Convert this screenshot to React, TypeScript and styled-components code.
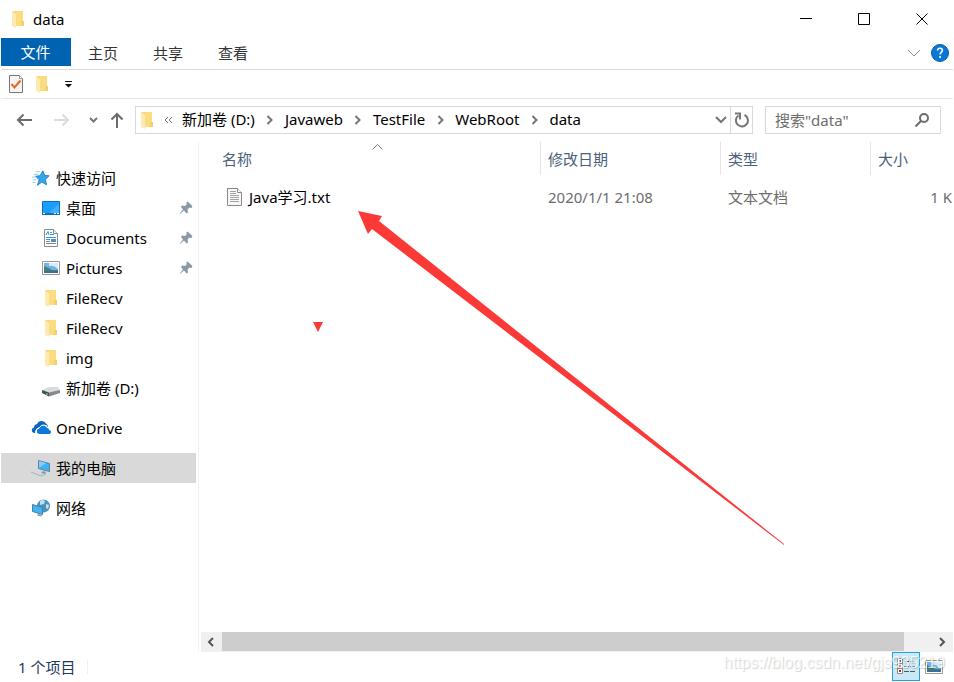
import React from "react";
import styled, { createGlobalStyle } from "styled-components";

const GlobalStyle = createGlobalStyle`
  *, *::before, *::after { box-sizing: border-box; }
  html, body { margin: 0; padding: 0; background: #fff; }
  body, button, input, table {
    font-family: "Noto Sans", "Noto Sans CJK SC", sans-serif;
    font-size: 15px;
    line-height: 20px;
    color: #000;
  }
`;

const Window = styled.div`
  display: flex;
  flex-direction: column;
  min-height: 100vh;
  padding: 0 1px;
  overflow: hidden;
  background: #fff;
  svg { display: block; flex: none; }
`;

const PlainButton = styled.button`
  display: flex;
  align-items: center;
  justify-content: center;
  padding: 0;
  border: 0;
  background: transparent;
`;

const TitleBar = styled.header`
  display: flex;
  align-items: center;
  height: 38px;
  padding: 0 2px 0 10px;
`;

const Title = styled.h1`
  flex: 1;
  margin: 0 0 0 8px;
  font-size: 15px;
  font-weight: 400;
`;

const CaptionButton = styled(PlainButton)`
  width: 58px;
  height: 38px;
`;

const RibbonTabs = styled.nav`
  display: flex;
  height: 32px;
  border-bottom: 1px solid #dadbdc;
`;

const RibbonTab = styled(PlainButton)<{ $primary?: boolean }>`
  width: ${(p) => (p.$primary ? "70px" : "65px")};
  height: ${(p) => (p.$primary ? "28px" : "30px")};
  padding-right: 1px;
  color: ${(p) => (p.$primary ? "#fff" : "#333")};
  background: ${(p) => (p.$primary ? "#0063b1" : "transparent")};
`;

const Spacer = styled.div`
  flex: 1;
`;

const SmallButton = styled(PlainButton)`
  width: 26px;
  height: 30px;
`;

const QuickBar = styled.div`
  display: flex;
  align-items: center;
  height: 29px;
  padding-left: 2px;
  border-bottom: 1px solid #e8e8e8;
`;

const AddressBar = styled.div`
  display: flex;
  align-items: center;
  height: 43px;
  padding: 0 12px 2px 4px;
`;

const NavButton = styled(PlainButton)<{ $narrow?: boolean }>`
  width: ${(p) => (p.$narrow ? "24px" : "38px")};
  height: 28px;
`;

const PathBox = styled.div`
  display: flex;
  align-items: center;
  flex: 1;
  height: 28px;
  margin: 0 12px 0 6px;
  padding-left: 4px;
  border: 1px solid #d9d9d9;
`;

const Crumb = styled(PlainButton)`
  height: 26px;
  padding-bottom: 2px;
  white-space: nowrap;
`;

const CrumbArrow = styled.span<{ $first?: boolean }>`
  display: flex;
  justify-content: center;
  width: ${(p) => (p.$first ? "28px" : "30px")};
`;

const RefreshButton = styled(PlainButton)`
  width: 22px;
  height: 26px;
  border-left: 1px solid #d9d9d9;
`;

const SearchBox = styled.label`
  display: flex;
  align-items: center;
  width: 176px;
  height: 28px;
  padding: 0 11px 0 9px;
  border: 1px solid #d9d9d9;
`;

const SearchInput = styled.input`
  flex: 1;
  min-width: 0;
  padding: 0;
  border: 0;
  outline: 0;
  background: transparent;
  &::placeholder { color: #6d6d6d; opacity: 1; }
`;

const Main = styled.main`
  display: flex;
  flex: 1;
`;

const Sidebar = styled.nav`
  width: 198px;
  padding: 21px 2px 0 0;
  border-right: 1px solid #f2f2f2;
`;

const Tree = styled.ul`
  margin: 0;
  padding: 0;
  list-style: none;
`;

const TreeRow = styled.li<{ $nested?: boolean; $selected?: boolean; $spaced?: boolean }>`
  display: flex;
  align-items: center;
  height: 30px;
  margin-top: ${(p) => (p.$spaced ? "10px" : "0")};
  padding: 0 3px 0 ${(p) => (p.$nested ? "40px" : "30px")};
  background: ${(p) => (p.$selected ? "#d9d9d9" : "transparent")};
`;

const TreeLink = styled.a`
  display: flex;
  flex: 1;
  align-items: center;
  gap: 5px;
  color: inherit;
  text-decoration: none;
  white-space: nowrap;
`;

const IconSlot = styled.span`
  display: flex;
  justify-content: center;
  width: 20px;
`;

const FilePane = styled.section`
  position: relative;
  display: flex;
  flex: 1;
  flex-direction: column;
  min-width: 0;
  padding-left: 2px;
`;

const FileTable = styled.table`
  width: 100%;
  table-layout: fixed;
  border-collapse: separate;
  border-spacing: 0;
`;

const Column = styled.col<{ $width?: number }>`
  width: ${(p) => (p.$width ? `${p.$width}px` : "auto")};
`;

const HeadCell = styled.th<{ $first?: boolean }>`
  position: relative;
  height: 33px;
  padding: 0 0 0 ${(p) => (p.$first ? "21px" : "7px")};
  border-left: ${(p) => (p.$first ? "0" : "1px solid #e5e5e5")};
  color: #4c607a;
  font-weight: 400;
  text-align: left;
  white-space: nowrap;
`;

const SortMark = styled.span`
  position: absolute;
  top: 2px;
  left: 50%;
  padding-left: 1px;
`;

const Cell = styled.td<{ $right?: boolean }>`
  height: 44px;
  padding: 0 ${(p) => (p.$right ? "1px" : "0")} 0 8px;
  color: #6d6d6d;
  text-align: ${(p) => (p.$right ? "right" : "left")};
  white-space: nowrap;
`;

const FileName = styled.a`
  display: flex;
  align-items: center;
  gap: 6px;
  padding-left: 18px;
  color: #000;
  text-decoration: none;
`;

const Annotation = styled.svg`
  position: absolute;
  top: 58px;
  left: 109px;
  pointer-events: none;
`;

const ScrollTrack = styled.div`
  display: flex;
  height: 20px;
  margin-top: auto;
  background: #f0f0f0;
`;

const ScrollButton = styled(PlainButton)<{ $end?: boolean }>`
  width: 21px;
  margin-left: ${(p) => (p.$end ? "auto" : "0")};
  padding-right: 2px;
`;

const ScrollThumb = styled.div`
  flex: 0 1 682px;
  height: 19px;
  background: #cdcdcd;
`;

const StatusBar = styled.footer`
  position: relative;
  display: flex;
  align-items: center;
  height: 30px;
  padding: 0 5px 1px 17px;
  color: #1e395b;
`;

const StatusText = styled.span`
  padding-right: 12px;
  border-right: 1px solid #f0f0f0;
  line-height: 14px;
`;

const ViewButton = styled(PlainButton)<{ $active?: boolean }>`
  width: 28px;
  height: 29px;
  border: 1px solid ${(p) => (p.$active ? "#26a0da" : "transparent")};
  background: ${(p) => (p.$active ? "#cbe8f6" : "transparent")};
`;

const Watermark = styled.span`
  position: absolute;
  right: 8px;
  bottom: 9px;
  color: rgba(255, 255, 255, 0.8);
  font-family: "Liberation Sans", sans-serif;
  font-size: 16px;
  text-shadow: 1px 1px 1px rgba(0, 0, 0, 0.18);
  pointer-events: none;
`;

const FolderIcon = () => (
  <svg width="14" height="18" viewBox="0 0 14 18" aria-hidden="true">
    <path d="M1 1h11v10h1v5H3z" fill="#f8d775" />
    <path d="M5 1h7v15H5z" fill="#fbdc80" />
    <path d="M10 11h3v5h-3z" fill="#f5cf68" />
    <path d="M1 1l4 3v14l-4-2z" fill="#fdeab0" />
  </svg>
);

const PropertiesIcon = () => (
  <svg width="16" height="20" viewBox="0 0 16 20" aria-hidden="true">
    <path d="M1.500 1.500h10l3 3v14h-13z" fill="#f5f5f5" stroke="#777" />
    <path d="M11.500 1.500v3h3" fill="#fff" stroke="#999" />
    <path d="M3.500 10l3 3.500 6-7" fill="none" stroke="#ef6321" strokeWidth="2" />
  </svg>
);

type ChevronProps = { d: string; w: number; h: number; color?: string; stroke?: number };
const Chevron = ({ d, w, h, color = "#767676", stroke = 2 }: ChevronProps) => (
  <svg width={w} height={h} viewBox={`0 0 ${w} ${h}`} aria-hidden="true">
    <path d={d} fill="none" stroke={color} strokeWidth={stroke} />
  </svg>
);

const CrumbSeparator = () => (
  <CrumbArrow>
    <Chevron d="M1.500 1l4 4-4 4" w={7} h={10} />
  </CrumbArrow>
);

const StarIcon = () => (
  <svg width="18" height="18" viewBox="0 0 20 18" aria-hidden="true">
    <path d="M12 1l2 5 5 .5-4 4 1 6-5-3-5 3.500 2-6-4-4 5-.5z" fill="#38a4e8" stroke="#1580cf" />
    <path d="M4 2h5M2 5h5M0 8h4M1 11h4M1 14h3" stroke="#8bcaf2" />
  </svg>
);

const DesktopIcon = () => (
  <svg width="18" height="14" viewBox="0 0 18 14" aria-hidden="true">
    <path d="M.5.5h17v12H.5z" fill="#1a9fff" stroke="#0a6fc2" />
    <path d="M7 12L17 3v9z" fill="#41b0ff" />
    <path d="M0 13h18" stroke="#0b6fb8" strokeWidth="2" />
    <path d="M1 12.500h2M12 12.500h2M15 12.500h2" stroke="#fff" />
  </svg>
);

const DocumentIcon = () => (
  <svg width="16" height="18" viewBox="0 0 16 18" aria-hidden="true">
    <path d="M1.500.5h9l4 4v13h-13z" fill="#fff" stroke="#8b8b8b" />
    <path d="M10.500.5v4h4" fill="#eee" stroke="#8b8b8b" />
    <path d="M3 6l2-3.500 1 3.500M7 3.500h2M7 5.500h4M3 8.500h10M3 10.500h4" fill="none" stroke="#2f97dc" />
    <path d="M3 12.500h4M3 14.500h10" stroke="#888" />
    <path d="M8 10h5v3H8z" fill="#4a90c8" />
  </svg>
);

const PictureIcon = () => (
  <svg width="18" height="14" viewBox="0 0 18 14" aria-hidden="true">
    <path d="M.5.5h17v13H.5z" fill="#fff" stroke="#999" />
    <path d="M2 2h14v10H2z" fill="#6db3ee" />
    <path d="M7 2h9v6q-4-4-9-3z" fill="#d8ebfa" />
    <path d="M2 5q5 2 8 4h6v1H2z" fill="#4b7f6d" />
    <path d="M2 10h14v2H2z" fill="#3a6f9a" />
  </svg>
);

const DriveIcon = () => (
  <svg width="20" height="18" viewBox="0 0 20 18" aria-hidden="true">
    <path d="M1 11l7-3h9l2 3-11 3z" fill="#d9dcde" />
    <path d="M1 11l7 2.500v4L1 14z" fill="#4c4f52" />
    <path d="M8 13.500l11-2.500v3L8 17.500z" fill="#85898c" />
    <path d="M5 14h2v2H5z" fill="#2fc14a" />
  </svg>
);

const OneDriveIcon = () => (
  <svg width="20" height="16" viewBox="0 0 20 16" aria-hidden="true">
    <path d="M4 13H3a2.800 2.800 0 0 1 0-5.500A3.800 3.800 0 0 1 6 4a5 5 0 0 1 9-.5q2 1 2 3.500Q12 3 9 7.500 4 8 4 13z" fill="#0a64c0" />
    <path d="M8 14a2.800 2.800 0 0 1 0-5.500 4.300 4.300 0 0 1 8-.5q2 0 2 2a2 2 0 0 1 0 4z" fill="#0a78dc" />
    <path d="M5 12q0-4 3.500-4.500Q11 3.500 16 6" fill="none" stroke="#fff" />
  </svg>
);

const ComputerIcon = () => (
  <svg width="20" height="18" viewBox="0 0 20 18" aria-hidden="true">
    <path d="M7.500 1.500l11 3v8l-11-3z" fill="#3cb2f7" stroke="#65819a" />
    <path d="M8 2l7 2-7 5z" fill="#83cffb" />
    <path d="M12 12l3 1-1 2-4-1z" fill="#8999a5" />
    <path d="M0 13l10 4 5-2" fill="none" stroke="#9eb3c4" />
  </svg>
);

const NetworkIcon = () => (
  <svg width="20" height="18" viewBox="0 0 20 18" aria-hidden="true">
    <circle cx="12.500" cy="7" r="6.500" fill="#4c92bf" />
    <path d="M9 2q3-2 5 0l-1 3-4 1zM15 5l3 1-1 4-2-1z" fill="#c5dfed" />
    <path d="M1.500 5.500l10 3v7l-10-3z" fill="#3eb5f6" stroke="#517d9b" />
    <path d="M7 15l4 1-1 1.500-4-1z" fill="#8b9ba7" />
  </svg>
);

const PinIcon = () => (
  <svg width="14" height="14" viewBox="0 0 14 14" aria-hidden="true">
    <path d="M8 1l5 5-1 1-1.500-.5-2 2 .5 3-1.500 1L5 9.500 1 13H.5l3.500-4.500L2 6l1-1.500 3 .5 2-2z" fill="#8a99a5" />
    <path d="M8.500.5l5 4.500L12 7 7 2z" fill="#8a99a5" />
  </svg>
);

const TextFileIcon = () => (
  <svg width="16" height="18" viewBox="0 0 16 18" aria-hidden="true">
    <path d="M.5.5h10l4 4v13H.5z" fill="#f7f7f7" stroke="#888" />
    <path d="M10.500.5v4h4" fill="#fff" stroke="#888" />
    <path d="M3 3.500h6M3 5.500h6M3 7.500h9M3 9.500h9M3 11.500h9M3 13.500h9" stroke="#a3a3a3" />
  </svg>
);

type Entry = { label: string; icon: React.ReactNode; nested?: boolean; pinned?: boolean; selected?: boolean; spaced?: boolean };
const entries: Entry[] = [
  { label: "快速访问", icon: <StarIcon /> },
  { label: "桌面", icon: <DesktopIcon />, nested: true, pinned: true },
  { label: "Documents", icon: <DocumentIcon />, nested: true, pinned: true },
  { label: "Pictures", icon: <PictureIcon />, nested: true, pinned: true },
  { label: "FileRecv", icon: <FolderIcon />, nested: true },
  { label: "FileRecv", icon: <FolderIcon />, nested: true },
  { label: "img", icon: <FolderIcon />, nested: true },
  { label: "新加卷 (D:)", icon: <DriveIcon />, nested: true },
  { label: "OneDrive", icon: <OneDriveIcon />, spaced: true },
  { label: "我的电脑", icon: <ComputerIcon />, spaced: true, selected: true },
  { label: "网络", icon: <NetworkIcon />, spaced: true },
];

const crumbs = ["新加卷 (D:)", "Javaweb", "TestFile", "WebRoot", "data"];

export default function App() {
  return (
    <>
      <GlobalStyle />
      <Window>
        <TitleBar>
          <FolderIcon />
          <Title>data</Title>
          <CaptionButton aria-label="最小化">
            <Chevron d="M0 5.500h12" w={12} h={12} color="#000" stroke={1} />
          </CaptionButton>
          <CaptionButton aria-label="最大化">
            <Chevron d="M.5.5h11v11H.5z" w={12} h={12} color="#000" stroke={1} />
          </CaptionButton>
          <CaptionButton aria-label="关闭">
            <Chevron d="M.5.5l11 11M11.500.5l-11 11" w={12} h={12} color="#000" stroke={1} />
          </CaptionButton>
        </TitleBar>

        <RibbonTabs>
          <RibbonTab $primary>文件</RibbonTab>
          <RibbonTab>主页</RibbonTab>
          <RibbonTab>共享</RibbonTab>
          <RibbonTab>查看</RibbonTab>
          <Spacer />
          <SmallButton aria-label="展开功能区">
            <Chevron d="M1 1l6 6 6-6" w={14} h={8} color="#8c8c8c" stroke={1} />
          </SmallButton>
          <SmallButton aria-label="帮助">
            <svg width="18" height="18" viewBox="0 0 18 18" aria-hidden="true">
              <circle cx="9" cy="9" r="8.500" fill="#0a78d7" stroke="#075ba5" />
              <path d="M6.500 6.500q.2-2.200 2.500-2.200t2.400 2c0 1.700-2.300 2-2.300 4.200M9.100 12v2" fill="none" stroke="#fff" strokeWidth="1.600" />
            </svg>
          </SmallButton>
        </RibbonTabs>

        <QuickBar>
          <SmallButton aria-label="属性"><PropertiesIcon /></SmallButton>
          <SmallButton aria-label="新建文件夹"><FolderIcon /></SmallButton>
          <SmallButton aria-label="自定义快速访问工具栏">
            <svg width="7" height="7" viewBox="0 0 7 7" aria-hidden="true">
              <path d="M0 0h7v1H0zM0 3h7L3.500 6.500z" fill="#111" />
            </svg>
          </SmallButton>
        </QuickBar>

        <AddressBar>
          <NavButton aria-label="后退">
            <Chevron d="M16 7H2M7.500 1.500L2 7l5.500 5.500" w={16} h={14} color="#6b6b6b" />
          </NavButton>
          <NavButton aria-label="前进">
            <Chevron d="M0 7h14M8.500 1.500L14 7l-5.500 5.500" w={16} h={14} color="#dcdcdc" />
          </NavButton>
          <NavButton aria-label="最近浏览的位置" $narrow>
            <Chevron d="M1 1l3.500 3.500L8 1" w={9} h={6} />
          </NavButton>
          <NavButton aria-label="向上" $narrow>
            <Chevron d="M7 16V2M1.500 7.500L7 2l5.500 5.500" w={14} h={16} color="#6b6b6b" />
          </NavButton>
          <PathBox>
            <FolderIcon />
            <CrumbArrow $first>
              <Chevron d="M4 1L1 4l3 3M8 1L5 4l3 3" w={9} h={8} stroke={1} />
            </CrumbArrow>
            {crumbs.map((name, i) => (
              <React.Fragment key={name}>
                {i > 0 && <CrumbSeparator />}
                <Crumb>{name}</Crumb>
              </React.Fragment>
            ))}
            <Spacer />
            <PlainButton aria-label="以前的位置">
              <Chevron d="M1 1l5 5 5-5" w={15} h={8} />
            </PlainButton>
            <RefreshButton aria-label="刷新">
              <svg width="14" height="16" viewBox="0 0 14 16" aria-hidden="true">
                <path d="M9.500 3A6 6 0 1 1 3.500 3.500" fill="none" stroke="#767676" strokeWidth="2" />
                <path d="M0 1.500h5v6" fill="none" stroke="#767676" strokeWidth="2" />
              </svg>
            </RefreshButton>
          </PathBox>
          <SearchBox>
            <SearchInput type="text" aria-label="搜索" placeholder={'搜索"data"'} />
            <svg width="14" height="14" viewBox="0 0 14 14" aria-hidden="true">
              <circle cx="9" cy="5" r="4" fill="none" stroke="#6b6b6b" strokeWidth="2" />
              <path d="M6 8l-5.500 5.500" stroke="#6b6b6b" strokeWidth="2" />
            </svg>
          </SearchBox>
        </AddressBar>

        <Main>
          <Sidebar>
            <Tree>
              {entries.map((e, i) => (
                <TreeRow key={i} $nested={e.nested} $selected={e.selected} $spaced={e.spaced}>
                  <TreeLink href="#">
                    <IconSlot>{e.icon}</IconSlot>
                    {e.label}
                  </TreeLink>
                  {e.pinned && <PinIcon />}
                </TreeRow>
              ))}
            </Tree>
          </Sidebar>

          <FilePane>
            <FileTable>
              <colgroup>
                <Column />
                <Column $width={180} />
                <Column $width={150} />
                <Column $width={83} />
              </colgroup>
              <thead>
                <tr>
                  <HeadCell $first>
                    名称
                    <SortMark>
                      <Chevron d="M.5 5.500l5-5 5 5" w={11} h={6} color="#777" stroke={1} />
                    </SortMark>
                  </HeadCell>
                  <HeadCell>修改日期</HeadCell>
                  <HeadCell>类型</HeadCell>
                  <HeadCell>大小</HeadCell>
                </tr>
              </thead>
              <tbody>
                <tr>
                  <Cell>
                    <FileName href="#"><TextFileIcon />Java学习.txt</FileName>
                  </Cell>
                  <Cell>2020/1/1 21:08</Cell>
                  <Cell>文本文档</Cell>
                  <Cell $right>1 K</Cell>
                </tr>
              </tbody>
            </FileTable>
            <Annotation width="480" height="350" viewBox="0 0 480 350" aria-hidden="true">
              <path d="M50 11l24 5-3 5 405 323v1L64 29l-4 5z" fill="#fb3a38" />
              <path d="M5 122h10l-5 10z" fill="#fb3a38" />
            </Annotation>
            <ScrollTrack>
              <ScrollButton aria-label="向左滚动">
                <Chevron d="M6 1L2 5l4 4" w={8} h={10} color="#555" />
              </ScrollButton>
              <ScrollThumb />
              <ScrollButton $end aria-label="向右滚动">
                <Chevron d="M2 1l4 4-4 4" w={8} h={10} color="#555" />
              </ScrollButton>
            </ScrollTrack>
          </FilePane>
        </Main>

        <StatusBar>
          <StatusText>1 个项目</StatusText>
          <Spacer />
          <ViewButton $active aria-label="详细信息">
            <svg width="18" height="17" viewBox="0 0 18 17" aria-hidden="true">
              <path d="M.5.5h5v5h-5zM.5 5.500h5v5h-5zM.5 10.500h5v5h-5z" fill="#fff" stroke="#8a8a8a" />
              <path d="M2 2h2v2H2z" fill="#3478a8" />
              <path d="M2 7h2v2H2z" fill="#c99660" />
              <path d="M2 12h2v2H2z" fill="#c22" />
              <path d="M7 3.500h5M13 3.500h5M7 8.500h5M13 8.500h5M7 13.500h5M13 13.500h5" stroke="#4d5a64" />
            </svg>
          </ViewButton>
          <ViewButton aria-label="大缩略图"><PictureIcon /></ViewButton>
          <Watermark>https://blog.csdn.net/gjs935219</Watermark>
        </StatusBar>
      </Window>
    </>
  );
}
